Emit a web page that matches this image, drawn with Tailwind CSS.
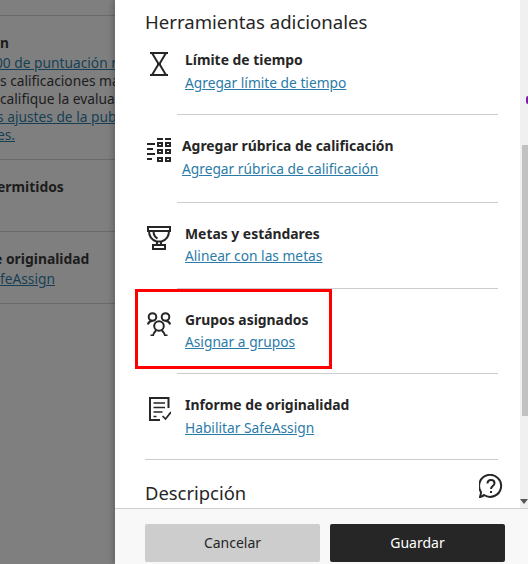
<!DOCTYPE html>
<html lang="es">
<head>
  <meta charset="UTF-8" />
  <title>Herramientas adicionales</title>
  <script src="https://cdn.jsdelivr.net/npm/@tailwindcss/browser@4"></script>
</head>
<body class="font-['Noto_Sans',sans-serif] text-[#262626]">
  <div class="flex h-[564px] w-[528px] overflow-hidden bg-white">

    <!-- Pagina atenuada detras del panel -->
    <div class="w-[115px] shrink-0 overflow-hidden bg-[#7f7f7f] text-[13.75px] text-[#1c1c1c]">
      <div class="ml-[-120px] w-[235px]">
        <div class="h-[16px] border-b border-[#6a6a6a]"></div>
        <div class="h-[144px] border-b border-[#6a6a6a] pt-[18px] pl-[120px] leading-[18px] whitespace-nowrap">
          <p class="mb-[2px] font-bold">n</p>
          <p class="ml-[-5px] text-[#163f55] underline">00 de puntuación real</p>
          <p>s calificaciones manuales</p>
          <p>califique la evaluación</p>
          <p class="ml-[-3px] text-[#163f55] underline">s ajustes de la publicación</p>
          <p class="ml-[-3px] text-[#163f55] underline">es.</p>
        </div>
        <div class="h-[72px] border-b border-[#6a6a6a] pt-[17px] pl-[120px] leading-[20px] font-bold whitespace-nowrap">
          <p class="ml-[-3px] text-[13.9px]">ermitidos</p>
        </div>
        <div class="h-[72px] border-b border-[#6a6a6a] pt-[17px] pl-[120px] leading-[20px] whitespace-nowrap">
          <p class="ml-[-6px] text-[13.9px] font-bold">e originalidad</p>
          <p class="text-[#163f55] underline">feAssign</p>
        </div>
      </div>
    </div>

    <!-- Panel -->
    <div class="relative flex w-[413px] shrink-0 flex-col bg-white shadow-[-3px_0_5px_rgba(0,0,0,0.18)]">
      <div class="flex h-[509px] border-b border-[#cdcdcd]">
        <div class="w-[405px] shrink-0 overflow-hidden pl-[30px]">
          <h2 class="mt-[9px] text-[18.6px] leading-[25px] whitespace-nowrap">Herramientas adicionales</h2>

          <!-- Limite de tiempo -->
          <div class="flex h-[80px] pt-[16px]">
            <div class="w-[40px] shrink-0 pt-[2px] pl-[2px]">
              <svg class="size-[24px]" viewBox="0 0 24 24" fill="none" stroke="#262626" stroke-width="2">
                <path d="M3 1h18M3 23h18M5 1l6 10v2L5 23M19 1l-6 10v2l6 10" />
              </svg>
            </div>
            <div>
              <p class="text-[13.9px] leading-[20px] font-bold">Límite de tiempo</p>
              <a class="mt-[2px] block text-[13.75px] leading-[22px] text-[#2b7ba8] underline">Agregar límite de tiempo</a>
            </div>
          </div>
          <div class="ml-[32px] h-px w-[321px] bg-[#cdcdcd]"></div>

          <!-- Rubrica -->
          <div class="flex h-[87px] pt-[21px]">
            <div class="w-[37px] shrink-0 pt-[2px] pl-[2px]">
              <svg class="size-[24px]" viewBox="0 0 24 24" fill="none" stroke="#262626" stroke-width="2">
                <path d="M0 6h8M0 11h6M0 16h8M0 21h5" />
                <path d="M10 1h6M18 1h6" />
                <rect x="11" y="5" width="4" height="3" />
                <rect x="19" y="5" width="4" height="3" />
                <rect x="11" y="12" width="4" height="3" />
                <rect x="19" y="12" width="4" height="3" />
                <rect x="11" y="20" width="4" height="3" />
                <rect x="19" y="20" width="4" height="3" />
              </svg>
            </div>
            <div>
              <p class="text-[13.9px] leading-[20px] font-bold whitespace-nowrap">Agregar rúbrica de calificación</p>
              <a class="mt-[2px] block text-[13.75px] leading-[22px] text-[#2b7ba8] underline">Agregar rúbrica de calificación</a>
            </div>
          </div>
          <div class="ml-[32px] h-px w-[321px] bg-[#cdcdcd]"></div>

          <!-- Metas -->
          <div class="flex h-[85px] pt-[21px]">
            <div class="w-[40px] shrink-0 pt-[2px] pl-[2px]">
              <svg class="size-[24px]" viewBox="0 0 24 24" fill="none" stroke="#262626" stroke-width="2">
                <path d="M1 1h22v4H1z" />
                <path d="M2 5c0 5 3 9 7.500 10.500h5C19 14 22 10 22 5" />
                <path d="M6.500 5c0 4 2 6.500 4 7.500M10 15.500V19M14 15.500V19M6 19h12v4H6z" />
              </svg>
            </div>
            <div>
              <p class="text-[13.9px] leading-[20px] font-bold">Metas y estándares</p>
              <a class="mt-[1px] block text-[13.75px] leading-[22px] text-[#2b7ba8] underline">Alinear con las metas</a>
            </div>
          </div>
          <div class="ml-[32px] h-px w-[321px] bg-[#cdcdcd]"></div>

          <!-- Grupos -->
          <div class="flex h-[84px] pt-[21px]">
            <div class="w-[40px] shrink-0 pt-[2px] pl-[2px]">
              <svg class="size-[24px]" viewBox="0 0 24 24" fill="none" stroke="#262626" stroke-width="2">
                <circle cx="5.500" cy="5" r="3.800" />
                <circle cx="18.500" cy="5" r="3.800" />
                <circle cx="12" cy="14" r="4.800" />
                <path d="M.8 12.500c.6-2 2.500-3.500 4.700-3.700M23.200 12.500c-.6-2-2.500-3.500-4.700-3.700" />
                <path d="M3.500 23.500h2.500c.5-2.500 2-4 3-5M20.500 23.500H18c-.5-2.500-2-4-3-5" />
              </svg>
            </div>
            <div>
              <p class="text-[13.9px] leading-[20px] font-bold">Grupos asignados</p>
              <a class="mt-[1px] block text-[13.75px] leading-[22px] text-[#2b7ba8] underline">Asignar a grupos</a>
            </div>
          </div>
          <div class="ml-[32px] h-px w-[321px] bg-[#cdcdcd]"></div>

          <!-- Informe -->
          <div class="flex h-[85px] pt-[21px]">
            <div class="w-[40px] shrink-0 pt-[2px] pl-[2px]">
              <svg class="size-[24px]" viewBox="0 0 24 24" fill="none" stroke="#262626" stroke-width="2">
                <path d="M21.500 11V1H3v22h10" />
                <path d="M6.500 6h11.500M6.500 10.500h11.500M6.500 15h9M6.500 19.500h3" stroke-width="1.700" />
                <path d="M15.500 19l3 3 5.500-7" stroke-width="1.700" />
              </svg>
            </div>
            <div>
              <p class="text-[13.9px] leading-[20px] font-bold">Informe de originalidad</p>
              <a class="mt-[2px] block text-[13.75px] leading-[22px] text-[#2b7ba8] underline">Habilitar SafeAssign</a>
            </div>
          </div>
          <div class="h-px w-[353px] bg-[#cdcdcd]"></div>

          <h2 class="mt-[20px] text-[18.4px] leading-[25px]">Descripción</h2>
        </div>

        <!-- Barra de desplazamiento -->
        <div class="relative w-[8px] bg-[#f0f0f0]">
          <div class="absolute top-[96px] right-0 h-[8px] w-[2px] rounded-l-full bg-[#7a1fa2]"></div>
          <div class="absolute top-[145px] right-0 h-[271px] w-[6px] bg-[#c1c1c1]"></div>
          <div class="absolute right-0 bottom-[4px] size-0 border-x-[4px] border-t-[5px] border-x-transparent border-t-[#555]"></div>
        </div>
      </div>

      <div class="flex flex-1 gap-[10px] bg-[#f8f8f8] pt-[15px] pl-[30px]">
        <button class="h-[38px] w-[175px] rounded-[2px] bg-[#cdcdcd] pb-[2px] text-[14px]">Cancelar</button>
        <button class="h-[38px] w-[175px] rounded-[2px] bg-[#262626] pb-[2px] text-[14px] text-white">Guardar</button>
      </div>

      <!-- Boton de ayuda -->
      <svg class="absolute top-[474px] left-[364px] size-[24px]" viewBox="0 0 24 24" fill="none" stroke="#262626" stroke-width="2">
        <path d="M1 23c1.500-.5 3-.8 4-2a11 11 0 1 0-3-3c0 2-.5 3.500-1 5z" />
        <path d="M8.500 9.500c0-2 1.500-3.500 3.500-3.500s3.500 1.400 3.500 3.200c0 2.800-3.500 3-3.500 5.800" />
        <path d="M12 17v2" />
      </svg>

      <!-- Recuadro rojo -->
      <div class="absolute top-[289px] left-[20px] h-[80px] w-[197px] border-[3px] border-[#ff0000]"></div>
    </div>
  </div>
</body>
</html>
